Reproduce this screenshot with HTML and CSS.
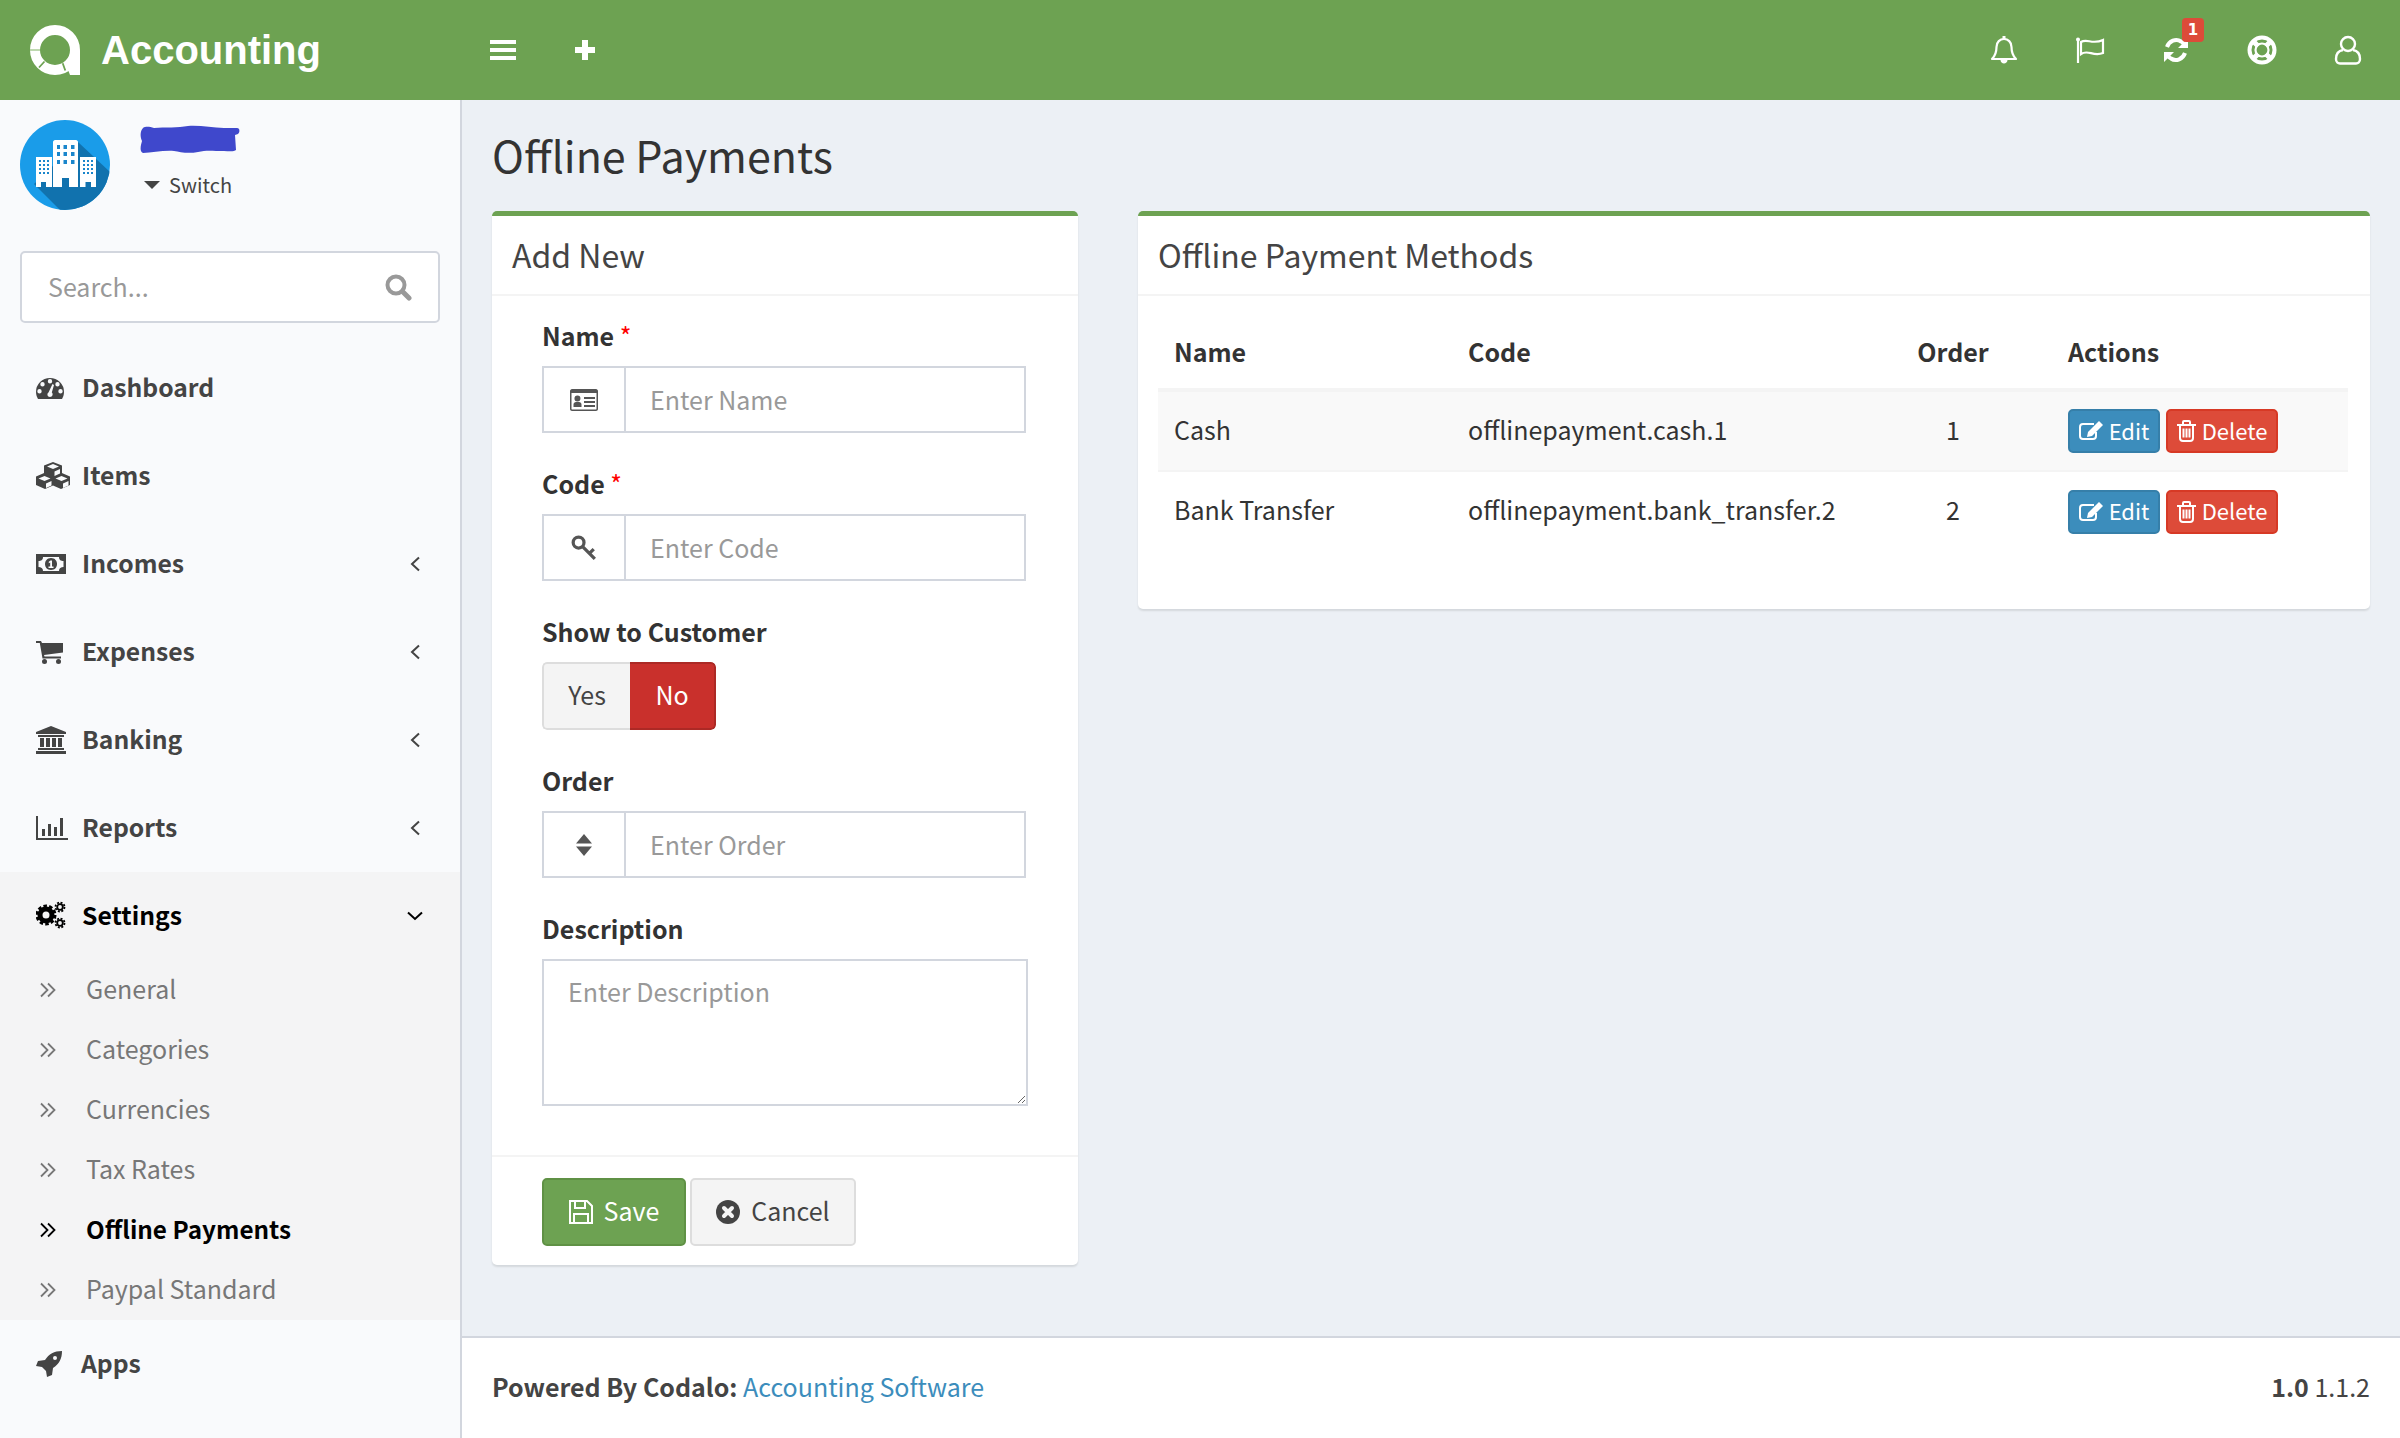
FILE: index.html
```html
<!DOCTYPE html>
<html lang="en">
<head>
<meta charset="utf-8">
<title>Offline Payments</title>
<link rel="stylesheet" href="styles.css">
</head>
<body>
<div class="app">
  <header class="topbar">
    <div class="brand">
      <svg class="logo" viewBox="0 0 50 50" width="50" height="50"><circle cx="25" cy="25" r="20" fill="none" stroke="#fff" stroke-width="10"/><path fill="#fff" d="M40 50L37 42L43 30L50 25V50Z"/><path stroke="#a8cb96" stroke-width="1.500" d="M0 25H10"/><path stroke="#6da252" stroke-width="1.800" d="M9 42.500L14.500 36.500M32.700 38.200L35.300 45.500"/></svg>
      <span class="brand-name">Accounting</span>
    </div>
    <div class="quick">
      <svg width="26" height="20" viewBox="0 0 26 20"><path fill="#fff" d="M0 0H26V4H0ZM0 8H26V12H0ZM0 16H26V20H0Z"/></svg>
      <svg width="22" height="22" viewBox="0 0 22 22"><path fill="#fff" d="M8 1H14V8H21V14H14V21H8V14H1V8H8Z"/></svg>
    </div>
    <div class="tools">
      <span class="tool"><svg width="28" height="30" viewBox="0 0 28 30"><path fill="none" stroke="#fff" stroke-width="2.200" stroke-linejoin="round" d="M2 24C6 20 6.500 17 6.500 12C6.500 7 10 4 14 4S21.500 7 21.500 12C21.500 17 22 20 26 24Z"/><path fill="#fff" d="M12.500 1H15.500V4H12.500ZM10.500 25H17.500C17.500 29.500 10.500 29.500 10.500 25Z"/></svg></span>
      <span class="tool"><svg width="30" height="26" viewBox="0 0 30 26"><path fill="none" stroke="#fff" stroke-width="2.200" d="M3 2V26"/><circle cx="3" cy="2.500" r="2" fill="#fff"/><path fill="none" stroke="#fff" stroke-width="2.200" d="M6 5C12 1 17 8 28 3V16C18 20 13 12 6 17Z"/></svg></span>
      <span class="tool"><svg width="26" height="26" viewBox="0 0 26 26"><path fill="none" stroke="#fff" stroke-width="4" d="M4 10C6 4 13 1 18 4.500C20 5.500 21 7 22 8M22 16C20 22 13 25 8 21.500C6 20.500 5 19 4 18"/><path fill="#fff" d="M25 1V11H15ZM1 25V15H11Z"/></svg><span class="badge">1</span></span>
      <span class="tool"><svg width="30" height="30" viewBox="0 0 30 30"><circle cx="15" cy="15" r="12.500" fill="none" stroke="#fff" stroke-width="4"/><circle cx="15" cy="15" r="6.500" fill="none" stroke="#fff" stroke-width="2.200"/><path stroke="#fff" stroke-width="5" d="M6 6L11 11M24 6L19 11M6 24L11 19M24 24L19 19"/></svg></span>
      <span class="tool"><svg width="28" height="30" viewBox="0 0 28 30"><circle cx="14" cy="9" r="7" fill="none" stroke="#fff" stroke-width="2.400"/><path fill="none" stroke="#fff" stroke-width="2.400" d="M9 15C3 16 2 20 2 24C2 27 4 28.500 6 28.500H22C24 28.500 26 27 26 24C26 20 25 16 19 15"/></svg></span>
    </div>
  </header>

  <aside class="sidebar">
    <div class="company">
      <svg class="avatar" width="90" height="90" viewBox="0 0 90 90">
        <defs><clipPath id="disc"><circle cx="45" cy="45" r="45"/></clipPath></defs>
        <circle cx="45" cy="45" r="45" fill="#1a9ce9"/>
        <path clip-path="url(#disc)" fill="#1172ae" d="M58 22L92 54V92H42L14 64Z"/>
        <path fill="#fff" d="M35 20H56C57 20 58 21 58 22V67H49V58H42V67H33V22C33 21 34 20 35 20Z"/>
        <path fill="#1a86cc" d="M37 25H40V29H37ZM43.500 25H47V29H43.500ZM51 25H54.500V29H51ZM37 32H40V36H37ZM43.500 32H47V36H43.500ZM51 32H54.500V36H51ZM37 40H40V44H37ZM43.500 40H47V44H43.500ZM51 40H54.500V44H51Z"/>
        <path fill="#fff" d="M16 37H32V67H26V62H21V67H16ZM60 37H76V67H71V62H65.500V67H60Z"/>
        <path fill="#1a86cc" d="M19 40H21V42H19ZM23 40H25V42H23ZM27 40H29V42H27ZM19 44H21V46H19ZM23 44H25V46H23ZM27 44H29V46H27ZM19 48H21V50H19ZM23 48H25V50H23ZM27 48H29V50H27ZM19 52H21V54H19ZM23 52H25V54H23ZM27 52H29V54H27ZM63 40H65V42H63ZM67 40H69V42H67ZM71 40H73V42H71ZM63 44H65V46H63ZM67 44H69V46H67ZM71 44H73V46H71ZM63 48H65V50H63ZM67 48H69V50H67ZM71 48H73V50H71ZM63 52H65V54H63ZM67 52H69V54H67ZM71 52H73V54H71Z"/>
      </svg>
      <div class="company-info">
        <svg class="scribble" width="101" height="29" viewBox="0 0 101 29"><path fill="#3f48cc" d="M3 3C6 1 10 2 14 3C25 2 38 3 48 1C60 0 72 3 84 3H97C100 3 100 7 98 9L95 10L96 25C94 27 88 26 84 26C72 26 66 25 58 27C48 29 40 27 34 26C24 25 12 28 3 28C-1 26 1 20 2 16C0 12 0 6 3 3Z"/></svg>
        <div class="switch"><span class="caret"></span><span>Switch</span></div>
      </div>
    </div>
    <div class="search">
      <input class="search-input" type="text" placeholder="Search...">
      <svg width="28" height="28" viewBox="0 0 28 28"><circle cx="12" cy="12" r="8.500" fill="none" stroke="#999" stroke-width="4"/><path stroke="#999" stroke-width="5" stroke-linecap="round" d="M18.500 18.500L25 25"/></svg>
    </div>
    <ul class="nav">
      <li class="nav-item">
        <span class="nav-ico"><svg width="28" height="22" viewBox="0 0 28 22"><path fill="#444" fill-rule="evenodd" d="M0 15A14 14 0 0 1 28 15C28 18 27 20 26 22H2C1 20 0 18 0 15ZM14 2A2.200 2.200 0 1 0 14 6.400A2.200 2.200 0 1 0 14 2ZM6.500 5A2.200 2.200 0 1 0 6.500 9.400A2.200 2.200 0 1 0 6.500 5ZM21.500 5A2.200 2.200 0 1 0 21.500 9.400A2.200 2.200 0 1 0 21.500 5ZM3.500 12A2.200 2.200 0 1 0 3.500 16.400A2.200 2.200 0 1 0 3.500 12ZM24.500 12A2.200 2.200 0 1 0 24.500 16.400A2.200 2.200 0 1 0 24.500 12Z"/><path fill="#f9fafc" d="M16.500 7L18 8L15.800 15.500C17.500 17 16.500 20 14 20C11.500 20 10.500 17 12.500 15.500Z"/></svg></span>
        <span class="nav-text">Dashboard</span>
      </li>
      <li class="nav-item">
        <span class="nav-ico"><svg width="34" height="28" viewBox="0 0 34 28"><path fill="#444" d="M17 0L26 3.500V11L27 11.500L34 14.500V23L25 27L17 23.500L9 27L0 23V14.500L7 11.500L8 11V3.500Z"/><path fill="#f9fafc" d="M17 2L23 4.500L17 7L11 4.500ZM18.500 9.500L24 7V11.500L18.500 14ZM8.500 14L14.500 16.500L8.500 19L2.500 16.500ZM25.500 14L31.500 16.500L25.500 19L19.500 16.500ZM10 21.500L15.500 19V23.500L10 26ZM27 21.500L32.500 19V23.500L27 26Z"/></svg></span>
        <span class="nav-text">Items</span>
      </li>
      <li class="nav-item">
        <span class="nav-ico"><svg width="30" height="20" viewBox="0 0 30 20"><path fill="#444" fill-rule="evenodd" d="M0 0H30V20H0ZM7 3C7 6 5 7 2.500 7V13C5 13 7 14 7 17H23C23 14 25 13 27.500 13V7C25 7 23 6 23 3Z"/><path fill="#444" d="M15 4C19 4 21 7 21 10S19 16 15 16S9 13 9 10S11 4 15 4Z"/><path fill="#f9fafc" d="M14.500 6.500H16V12.500H17.500V14H12.500V12.500H14.200V8.500L12.800 9.300V7.800Z"/></svg></span>
        <span class="nav-text">Incomes</span>
        <svg class="nav-arrow" width="10" height="16" viewBox="0 0 10 16"><path fill="none" stroke="#444" stroke-width="2" d="M9 1.500L2 8L9 14.500"/></svg>
      </li>
      <li class="nav-item">
        <span class="nav-ico"><svg width="28" height="23" viewBox="0 0 28 23"><path fill="#444" d="M0 0H5L6 2H27V11.500L8 14L8.500 15.500H25V17.500H6.500L3.800 2H0Z"/><circle cx="8.500" cy="20.500" r="2.500" fill="#444"/><circle cx="22.500" cy="20.500" r="2.500" fill="#444"/></svg></span>
        <span class="nav-text">Expenses</span>
        <svg class="nav-arrow" width="10" height="16" viewBox="0 0 10 16"><path fill="none" stroke="#444" stroke-width="2" d="M9 1.500L2 8L9 14.500"/></svg>
      </li>
      <li class="nav-item">
        <span class="nav-ico"><svg width="30" height="28" viewBox="0 0 30 28"><path fill="#444" d="M15 0L30 6V8H0V6ZM2 9H28V11H2ZM4 12H8V21H4ZM10 12H14V21H10ZM16 12H20V21H16ZM22 12H26V21H22ZM2 22H28V24H2ZM0 25H30V28H0Z"/></svg></span>
        <span class="nav-text">Banking</span>
        <svg class="nav-arrow" width="10" height="16" viewBox="0 0 10 16"><path fill="none" stroke="#444" stroke-width="2" d="M9 1.500L2 8L9 14.500"/></svg>
      </li>
      <li class="nav-item">
        <span class="nav-ico"><svg width="32" height="24" viewBox="0 0 32 24"><path fill="#444" d="M0 0H2V22H32V24H0ZM6 13H9V20H6ZM12 8H15V20H12ZM18 11H21V20H18ZM24 2H27V20H24Z"/></svg></span>
        <span class="nav-text">Reports</span>
        <svg class="nav-arrow" width="10" height="16" viewBox="0 0 10 16"><path fill="none" stroke="#444" stroke-width="2" d="M9 1.500L2 8L9 14.500"/></svg>
      </li>
      <li class="nav-group">
        <div class="nav-item nav-item-open">
          <span class="nav-ico"><svg width="30" height="30" viewBox="0 0 30 30"><g fill="none" stroke="#000"><circle cx="10" cy="14" r="6" stroke-width="5"/><circle cx="10" cy="14" r="9" stroke-width="3" stroke-dasharray="3.500 2.155"/><circle cx="24" cy="6" r="2.800" stroke-width="1.800"/><circle cx="24" cy="6" r="4.500" stroke-width="1.800" stroke-dasharray="2 1.534"/><circle cx="24" cy="22" r="2.800" stroke-width="1.800"/><circle cx="24" cy="22" r="4.500" stroke-width="1.800" stroke-dasharray="2 1.534"/></g></svg></span>
          <span class="nav-text">Settings</span>
          <svg class="nav-arrow nav-arrow-down" width="16" height="10" viewBox="0 0 16 10"><path fill="none" stroke="#000" stroke-width="2" d="M1 1.500L8 8L15 1.500"/></svg>
        </div>
        <ul class="subnav">
          <li class="sub-item"><svg width="16" height="16" viewBox="0 0 16 16"><path fill="none" stroke="currentColor" stroke-width="1.800" d="M1 1.500L7.500 8L1 14.500M8 1.500L14.500 8L8 14.500"/></svg><span>General</span></li>
          <li class="sub-item"><svg width="16" height="16" viewBox="0 0 16 16"><path fill="none" stroke="currentColor" stroke-width="1.800" d="M1 1.500L7.500 8L1 14.500M8 1.500L14.500 8L8 14.500"/></svg><span>Categories</span></li>
          <li class="sub-item"><svg width="16" height="16" viewBox="0 0 16 16"><path fill="none" stroke="currentColor" stroke-width="1.800" d="M1 1.500L7.500 8L1 14.500M8 1.500L14.500 8L8 14.500"/></svg><span>Currencies</span></li>
          <li class="sub-item"><svg width="16" height="16" viewBox="0 0 16 16"><path fill="none" stroke="currentColor" stroke-width="1.800" d="M1 1.500L7.500 8L1 14.500M8 1.500L14.500 8L8 14.500"/></svg><span>Tax Rates</span></li>
          <li class="sub-item sub-item-active"><svg width="16" height="16" viewBox="0 0 16 16"><path fill="none" stroke="currentColor" stroke-width="1.800" d="M1 1.500L7.500 8L1 14.500M8 1.500L14.500 8L8 14.500"/></svg><span>Offline Payments</span></li>
          <li class="sub-item"><svg width="16" height="16" viewBox="0 0 16 16"><path fill="none" stroke="currentColor" stroke-width="1.800" d="M1 1.500L7.500 8L1 14.500M8 1.500L14.500 8L8 14.500"/></svg><span>Paypal Standard</span></li>
        </ul>
      </li>
      <li class="nav-item">
        <span class="nav-ico"><svg width="26" height="26" viewBox="0 0 26 26"><path fill="#444" fill-rule="evenodd" d="M26 0C26 8 23 13 17 17L16 24L11 26L10 20L6 16L0 15L2 10L9 9C13 3 18 0 26 0ZM19 5A2 2 0 1 0 19 9A2 2 0 1 0 19 5Z"/></svg></span>
        <span class="nav-text nav-text-apps">Apps</span>
      </li>
    </ul>
  </aside>

  <main class="content">
    <h1 class="page-title">Offline Payments</h1>
    <div class="cards">
      <section class="card card-form">
        <h2 class="card-title">Add New</h2>
        <form class="form-body">
          <div class="group">
            <label class="label">Name <em class="req">*</em></label>
            <div class="input-group">
              <span class="addon"><svg width="28" height="22" viewBox="0 0 28 22"><path fill="#555" fill-rule="evenodd" d="M2 0H26C27 0 28 1 28 2V20C28 21 27 22 26 22H2C1 22 0 21 0 20V2C0 1 1 0 2 0ZM1.500 4V20C1.500 20.300 1.700 20.500 2 20.500H26C26.300 20.500 26.500 20.300 26.500 20V4Z"/><path fill="#555" d="M7.500 6.500A3 3 0 1 1 7.400 12.500A3 3 0 1 1 7.500 6.500ZM3.500 18V15.500C3.500 13.500 5 13 7.500 13S11.500 13.500 11.500 15.500V18ZM14 8H25V10H14ZM14 12H25V14H14ZM14 16H25V18H14Z"/></svg></span>
              <input class="field" type="text" placeholder="Enter Name">
            </div>
          </div>
          <div class="group">
            <label class="label">Code <em class="req">*</em></label>
            <div class="input-group">
              <span class="addon"><svg width="26" height="26" viewBox="0 0 24 24"><circle cx="7" cy="7" r="5" fill="none" stroke="#555" stroke-width="3"/><path fill="none" stroke="#555" stroke-width="3" d="M10.500 10.500L22 22M17 17L21 13"/></svg></span>
              <input class="field" type="text" placeholder="Enter Code">
            </div>
          </div>
          <div class="group">
            <label class="label">Show to Customer</label>
            <div class="toggle"><span class="toggle-yes"><span class="tx">Yes</span></span><span class="toggle-no"><span class="tx">No</span></span></div>
          </div>
          <div class="group">
            <label class="label">Order</label>
            <div class="input-group">
              <span class="addon"><svg width="16" height="24" viewBox="0 0 16 24"><path fill="#555" d="M8 1L16 10.500H0ZM0 13.500H16L8 23Z"/></svg></span>
              <input class="field" type="text" placeholder="Enter Order">
            </div>
          </div>
          <div class="group group-last">
            <label class="label">Description</label>
            <textarea class="area" placeholder="Enter Description"></textarea>
          </div>
        </form>
        <div class="card-foot">
          <span class="btn btn-save"><svg width="24" height="24" viewBox="0 0 24 24"><path fill="none" stroke="#fff" stroke-width="2" d="M1 1H18L23 6V23H1ZM6 1V8H16V1M5 23V14H19V23"/></svg><span class="tx">Save</span></span>
          <span class="btn btn-cancel"><svg width="24" height="24" viewBox="0 0 24 24"><circle cx="12" cy="12" r="12" fill="#444"/><path stroke="#f4f4f4" stroke-width="4" stroke-linecap="round" d="M8 8L16 16M16 8L8 16"/></svg><span class="tx">Cancel</span></span>
        </div>
      </section>

      <section class="card card-table">
        <h2 class="card-title">Offline Payment Methods</h2>
        <div class="table-wrap">
          <table class="table">
            <colgroup><col class="c-name"><col class="c-code"><col class="c-order"><col class="c-actions"></colgroup>
            <thead><tr><th>Name</th><th>Code</th><th class="center">Order</th><th>Actions</th></tr></thead>
            <tbody>
              <tr class="odd"><td>Cash</td><td>offlinepayment.cash.1</td><td class="center">1</td><td>
                <div class="actions">
                  <span class="mini mini-edit"><svg width="24" height="20" viewBox="0 0 24 20"><path fill="none" stroke="#fff" stroke-width="2" d="M15 3H4C2 3 1 4 1 6V15C1 17 2 18 4 18H14C16 18 17 17 17 15V11"/><path fill="#fff" d="M20 0L24 4L13 15L8 16L9 11Z"/></svg><span class="tx">Edit</span></span>
                  <span class="mini mini-del"><svg width="19" height="22" viewBox="0 0 19 22"><path fill="none" stroke="#fff" stroke-width="2" d="M0 5H19M6 5V2C6 1.500 6.500 1 7 1H12C12.500 1 13 1.500 13 2V5M3 5V18C3 20 4 21 6 21H13C15 21 16 20 16 18V5M6.500 8.500V17.500M9.500 8.500V17.500M12.500 8.500V17.500"/></svg><span class="tx">Delete</span></span>
                </div>
              </td></tr>
              <tr class="even"><td>Bank Transfer</td><td>offlinepayment.bank_transfer.2</td><td class="center">2</td><td>
                <div class="actions">
                  <span class="mini mini-edit"><svg width="24" height="20" viewBox="0 0 24 20"><path fill="none" stroke="#fff" stroke-width="2" d="M15 3H4C2 3 1 4 1 6V15C1 17 2 18 4 18H14C16 18 17 17 17 15V11"/><path fill="#fff" d="M20 0L24 4L13 15L8 16L9 11Z"/></svg><span class="tx">Edit</span></span>
                  <span class="mini mini-del"><svg width="19" height="22" viewBox="0 0 19 22"><path fill="none" stroke="#fff" stroke-width="2" d="M0 5H19M6 5V2C6 1.500 6.500 1 7 1H12C12.500 1 13 1.500 13 2V5M3 5V18C3 20 4 21 6 21H13C15 21 16 20 16 18V5M6.500 8.500V17.500M9.500 8.500V17.500M12.500 8.500V17.500"/></svg><span class="tx">Delete</span></span>
                </div>
              </td></tr>
            </tbody>
          </table>
        </div>
      </section>
    </div>
    <footer class="footer">
      <div class="tx"><strong>Powered By Codalo:</strong> <span class="link">Accounting Software</span></div>
      <div class="tx"><strong>1.0</strong> 1.1.2</div>
    </footer>
  </main>
</div>
</body>
</html>
```
FILE: styles.css
```css
* { box-sizing: border-box; }
html, body { margin: 0; padding: 0; }
body {
  font-family: "Noto Sans CJK SC", "Noto Sans", sans-serif;
  font-size: 25px;
  color: #333;
  background: #ecf0f5;
}
ul { list-style: none; margin: 0; padding: 0; }
svg { display: block; flex: none; }
.tx { padding-bottom: 4px; }

.app {
  display: grid;
  grid-template-columns: 462px 1fr;
  grid-template-rows: 100px 1fr;
  height: 1438px;
  overflow: hidden;
}

/* top bar */
.topbar {
  grid-column: 1 / 3;
  display: flex;
  align-items: center;
  background: #6da252;
  color: #fff;
}
.brand { width: 490px; display: flex; align-items: center; padding-left: 30px; gap: 21px; }
.brand-name { font-family: "Liberation Sans", Arial, sans-serif; font-weight: 700; font-size: 40px; }
.quick { display: flex; align-items: center; gap: 58px; }
.tools { margin-left: auto; display: flex; align-items: center; padding-right: 9px; }
.tool { width: 86px; display: flex; justify-content: center; position: relative; }
.badge {
  position: absolute; left: 49px; top: -19px;
  width: 22px; height: 24px; border-radius: 4px;
  background: #dd4b39; color: #fff;
  font-family: "DejaVu Sans", sans-serif; font-size: 15px; font-weight: 700;
  display: flex; align-items: center; justify-content: center;
}

/* sidebar */
.sidebar { background: #f9fafc; border-right: 2px solid #d2d6de; }
.company { display: flex; padding: 20px 0 0 20px; height: 151px; gap: 30px; }
.company-info { padding-top: 5px; }
.scribble { margin-bottom: 16px; }
.switch { display: flex; align-items: center; gap: 9px; padding-left: 4px; font-size: 20px; color: #444; }
.caret { width: 0; height: 0; border-left: 8px solid transparent; border-right: 8px solid transparent; border-top: 8px solid #444; }
.search {
  margin: 0 20px; height: 72px; display: flex; align-items: center;
  background: #fff; border: 2px solid #d2d6de; border-radius: 5px; padding-right: 26px;
}
.search-input { flex: 1; min-width: 0; border: 0; outline: 0; background: transparent; padding: 0 0 2px 26px; font: inherit; color: #333; }
.search-input::placeholder { color: #999; opacity: 1; }
.nav { margin-top: 21px; }
.nav-item { height: 88px; display: flex; align-items: center; padding: 0 33px 0 36px; color: #444; font-weight: 600; font-size: 24.7px; }
.nav-ico { width: 46px; display: flex; }
.nav-text { flex: 1; padding-bottom: 4px; }
.nav-text-apps { margin-left: -1px; }
.nav-arrow { margin-right: 7px; }
.nav-arrow-down { margin-right: 4px; }
.nav-group { background: #f4f4f5; }
.nav-item-open { color: #000; }
.sub-item { height: 60px; display: flex; align-items: center; padding-left: 40px; gap: 30px; color: #777; font-size: 25px; }
.sub-item span { padding-bottom: 4px; }
.sub-item-active { color: #000; font-weight: 600; font-size: 24.3px; }

/* content */
.content { display: flex; flex-direction: column; min-width: 0; }
.page-title { margin: 0; padding: 0 30px 4px; height: 111px; display: flex; align-items: center; font-weight: 400; font-size: 43px; color: #333; }
.cards { display: flex; align-items: flex-start; gap: 60px; padding: 0 30px; }
.card { background: #fff; border-top: 5px solid #6da252; border-radius: 5px; box-shadow: 0 2px 2px rgba(0,0,0,.1); }
.card-form { width: 586px; flex: none; }
.card-table { flex: 1; min-width: 0; }
.card-title { margin: 0; height: 80px; display: flex; align-items: center; padding: 0 20px 3px; font-weight: 400; font-size: 32px; color: #444; border-bottom: 2px solid #f4f4f4; }

.form-body { padding: 26px 50px 49px; }
.group { margin-bottom: 37px; }
.group-last { margin-bottom: 0; }
.label { display: block; height: 30px; line-height: 26px; margin-bottom: 14px; font-weight: 700; color: #333; }
.req { font-style: normal; color: #f00; font-weight: 400; }
.input-group { display: flex; width: 484px; height: 67px; border: 2px solid #d2d6de; }
.addon { width: 82px; flex: none; display: flex; align-items: center; justify-content: center; border-right: 2px solid #d2d6de; }
.field { flex: 1; min-width: 0; border: 0; outline: 0; padding: 0 24px 2px; font: inherit; color: #333; }
.field::placeholder, .area::placeholder { color: #999; opacity: 1; }
.area { display: block; width: 486px; height: 147px; border: 2px solid #d2d6de; border-radius: 0; outline: 0; padding: 12px 24px; font: inherit; color: #333; }
.toggle { display: inline-flex; height: 68px; border-radius: 5px; overflow: hidden; }
.toggle-yes { width: 88px; display: flex; align-items: center; justify-content: center; background: #f4f4f4; color: #444; border: 2px solid #ddd; border-right: 0; border-radius: 5px 0 0 5px; }
.toggle-no { width: 86px; display: flex; align-items: center; justify-content: center; background: #c9302c; color: #fff; border: 2px solid #ac2925; border-left: 0; border-radius: 0 5px 5px 0; }

.card-foot { display: flex; gap: 4px; padding: 21px 50px 19px; border-top: 2px solid #f4f4f4; }
.btn { height: 68px; display: flex; align-items: center; justify-content: center; gap: 11px; border-radius: 5px; border: 2px solid; }
.btn-save { width: 144px; background: #6da252; border-color: #5f9145; color: #fff; }
.btn-cancel { width: 166px; background: #f4f4f4; border-color: #ddd; color: #444; }

.table-wrap { padding: 20px 22px 58px 20px; }
.table { width: 100%; table-layout: fixed; border-collapse: separate; border-spacing: 0; }
.c-name { width: 294px; }
.c-code { width: 402px; }
.c-order { width: 198px; }
.c-actions { width: 296px; }
.table th { height: 76px; text-align: left; padding: 0 16px 3px; font-weight: 700; border-bottom: 4px solid #f4f4f4; }
.table td { height: 80px; padding: 0 16px 5px; }
.table .center { text-align: center; }
.odd td { background: #f9f9f9; border-bottom: 2px solid #f4f4f4; }
.even td { height: 79px; }
.table td:last-child { padding-bottom: 0; }
.actions { display: flex; gap: 6px; }
.mini { height: 44px; display: flex; align-items: center; justify-content: center; gap: 6px; border-radius: 5px; border: 2px solid; color: #fff; font-size: 22px; }
.mini .tx { padding-bottom: 3px; }
.mini-edit { width: 92px; background: #3c8dbc; border-color: #367fa9; }
.mini-del { width: 112px; background: #dd4b39; border-color: #d73925; }

.footer {
  margin-top: auto; height: 102px; display: flex; align-items: center; justify-content: space-between;
  padding: 0 30px; background: #fff; border-top: 2px solid #d2d6de; color: #444;
}
.link { color: #3c8dbc; }
```
